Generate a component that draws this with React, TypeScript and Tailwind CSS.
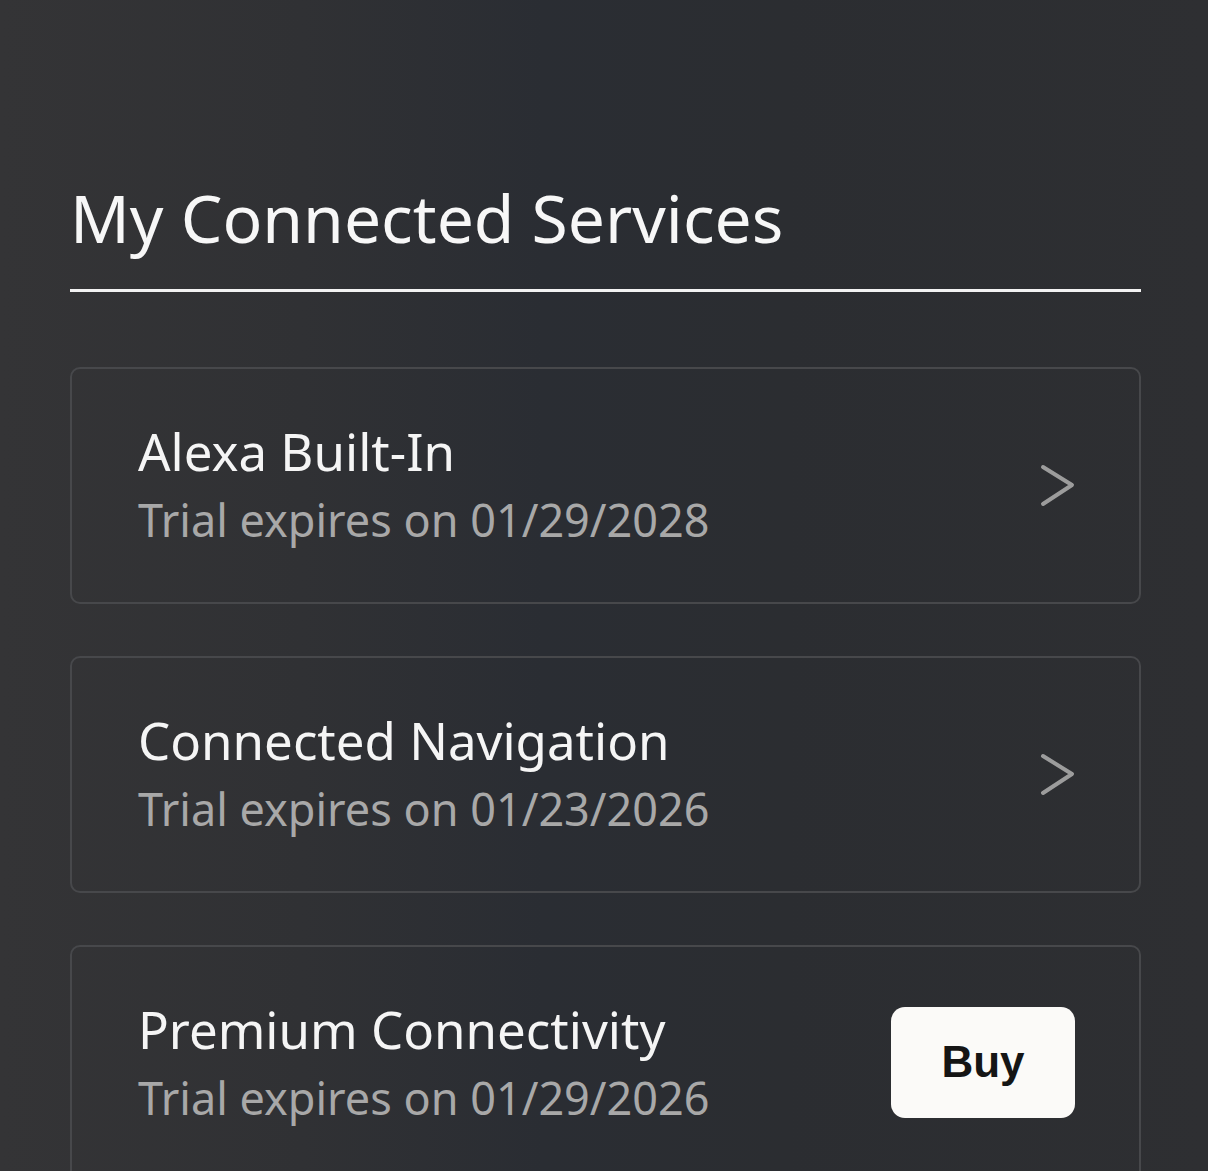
const services = [
  { name: "Alexa Built-In", expires: "01/29/2028", action: "chevron" },
  { name: "Connected Navigation", expires: "01/23/2026", action: "chevron" },
  { name: "Premium Connectivity", expires: "01/29/2026", action: "buy" },
];

const Chevron = () => (
  <svg width="36" height="44" viewBox="0 0 36 44" fill="none">
    <path
      d="M3 3 L32 21 L3 40"
      stroke="#9c9c9c"
      strokeWidth="4"
      strokeLinecap="round"
      strokeLinejoin="round"
    />
  </svg>
);

export default function App() {
  return (
    <div
      className="h-[1171px] w-[1208px] overflow-hidden bg-[linear-gradient(90deg,#343436_0%,#303134_25%,#2a2d33_45%,#2b2d31_65%,#2e2f32_100%)] px-[70px] pt-[177px] text-white"
      style={{ fontFamily: '"Noto Sans", sans-serif' }}
    >
      <h1 className="text-[66px] leading-[80px] font-normal text-[#f7f7f7]">
        My Connected Services
      </h1>
      <div className="mt-[32px] h-[3px] w-[1071px] bg-[#f2f2f2]" />
      <ul className="mt-[75px] flex flex-col gap-[52px]">
        {services.map((s) => (
          <li
            key={s.name}
            className="flex h-[237px] w-[1071px] items-center justify-between rounded-[10px] border-2 border-[#47484b] pr-[63px] pl-[66px]"
          >
            <div className="flex flex-col">
              <p className="text-[51px] leading-[62px] text-[#f5f5f5]">
                {s.name}
              </p>
              <p className="mt-[6px] text-[45px] leading-[64px] text-[#a8a8a8]">
                Trial expires on {s.expires}
              </p>
            </div>
            {s.action === "chevron" ? (
              <Chevron />
            ) : (
              <button
                className="mr-[1px] mb-[3px] flex h-[111px] w-[184px] items-center justify-center rounded-[14px] bg-[#fbfaf8] text-[44px] font-semibold text-[#151515]"
                style={{ fontFamily: '"Liberation Sans", Arial, sans-serif' }}
              >
                Buy
              </button>
            )}
          </li>
        ))}
      </ul>
    </div>
  );
}
